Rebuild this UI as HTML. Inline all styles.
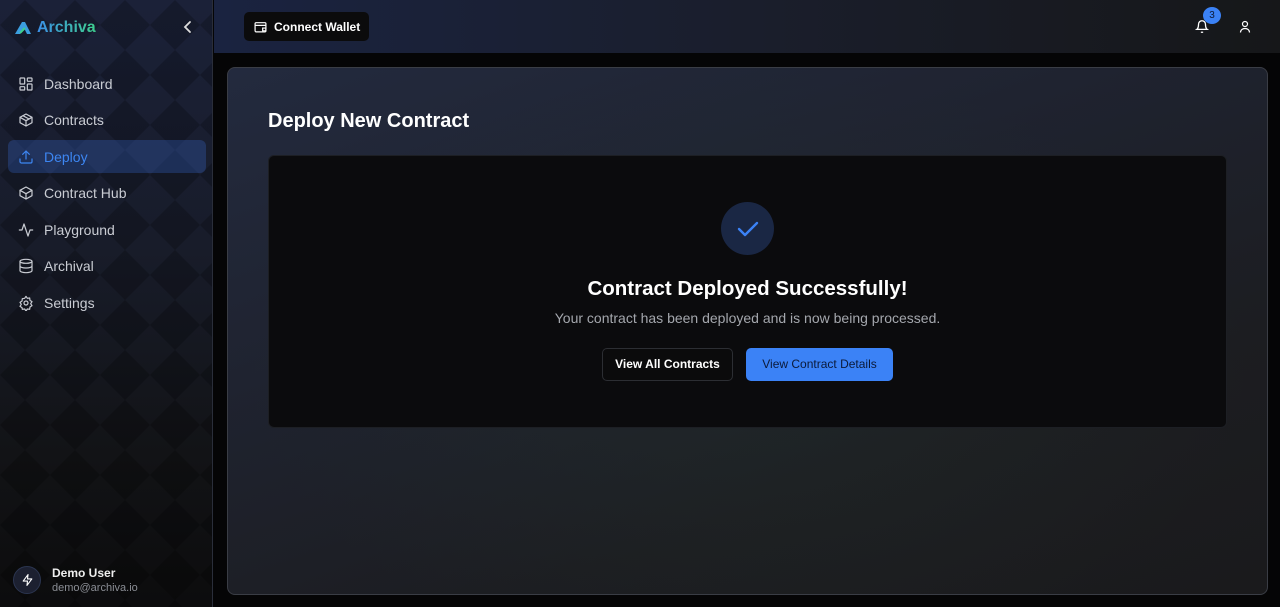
<!DOCTYPE html>
<html><head><meta charset="utf-8"><style>
*{box-sizing:border-box;margin:0;padding:0}
body{width:1280px;height:607px;overflow:hidden;background:#050506;font-family:"Liberation Sans",sans-serif;position:relative}
.side{position:absolute;left:0;top:0;width:213px;height:607px;background:linear-gradient(180deg,#1b2138 0%,#181c2a 40%,#121316 75%,#0c0c0d 100%);border-right:1px solid #2a2e3a;overflow:hidden}
.pat{position:absolute;inset:0;opacity:.2}
.logo{position:absolute;left:15px;top:19px;display:flex;align-items:center;gap:6px;font-size:16px;font-weight:bold;color:#4aa6e8}
.logo span{background:linear-gradient(90deg,#3b8fe8,#3ecf8e);-webkit-background-clip:text;color:transparent}
.chev{position:absolute;left:183px;top:20px}
.nav{position:absolute;left:8px;top:67px;width:198px}
.it{height:33px;margin-bottom:3.6px;display:flex;align-items:center;padding-left:10px;gap:10px;color:#c9ccd3;font-size:14px;border-radius:6px}
.it.act{background:rgba(59,110,220,.28);color:#3d86f2}
.it svg{width:16px;height:16px;fill:none;stroke:currentColor;stroke-width:1.8;stroke-linecap:round;stroke-linejoin:round}
.user{position:absolute;left:13px;top:566px;display:flex;align-items:center;gap:11px}
.av{width:28px;height:28px;border-radius:50%;background:#1c2030;border:1px solid #2b3550;display:flex;align-items:center;justify-content:center}
.un{color:#eee;font-size:12px;font-weight:bold}
.ue{color:#8a8d94;font-size:11px;margin-top:2px}
.top{position:absolute;left:214px;top:0;width:1066px;height:53px;background:linear-gradient(90deg,#1a2340 0%,#1a1e2c 50%,#161719 100%)}
.cw{position:absolute;left:244px;top:12px;width:125px;height:29px;background:#0b0b0c;border-radius:5px;color:#fff;font-size:12px;font-weight:bold;display:flex;align-items:center;padding-left:10px;gap:7px}
.panel{position:absolute;left:227px;top:67px;width:1041px;height:528px;border:1px solid #3a3d45;border-radius:8px;background:radial-gradient(ellipse 500px 300px at 520px 300px,rgba(40,60,50,.25),transparent),linear-gradient(160deg,#232a3e 0%,#1f2330 35%,#1c1d21 70%,#1a1a1c 100%)}
h1{position:absolute;left:268px;top:110px;color:#fff;font-size:20px;font-weight:bold}
.card{position:absolute;left:268px;top:155px;width:959px;height:273px;background:#0b0b0d;border:1px solid #1d1f24;border-radius:6px}
.chk{position:absolute;left:721px;top:202px;width:53px;height:53px;border-radius:50%;background:#1a2744;display:flex;align-items:center;justify-content:center}
.t1{position:absolute;left:0;width:1495px;top:277px;text-align:center;color:#fff;font-size:20.5px;font-weight:bold}
.t2{position:absolute;left:0;width:1495px;top:310px;text-align:center;color:#a4a7ad;font-size:14px}
.b1{position:absolute;left:602px;top:348px;width:131px;height:33px;border:1px solid #2c2e33;background:#0b0b0c;border-radius:5px;color:#fff;font-size:12px;font-weight:bold;text-align:center;line-height:31px}
.b2{position:absolute;left:746px;top:348px;width:147px;height:33px;background:#3b82f6;border-radius:5px;color:#0b1a3a;font-size:12px;text-align:center;line-height:33px}
</style></head><body>
<div class="side">
<svg class="pat" width="213" height="607"><defs><pattern id="p" width="50" height="50" patternUnits="userSpaceOnUse"><path d="M25 0L50 25L25 50L0 25Z" fill="#000"/></pattern></defs><rect width="213" height="607" fill="url(#p)"/></svg>
<div class="logo"><svg width="16" height="14" viewBox="0 0 16 14"><path d="M0 13L7 1h3l6 12h-4L9 7l-4 6z" fill="#3b9ee0"/><path d="M5 12l5-5" stroke="#3ecf8e" stroke-width="2"/></svg><span>Archiva</span></div>
<svg class="chev" width="10" height="14" viewBox="0 0 10 14"><path d="M7 2L2 7l5 5" stroke="#ddd" stroke-width="1.8" fill="none" stroke-linecap="round"/></svg>
<div class="nav">
<div class="it"><svg viewBox="0 0 24 24"><rect x="3" y="3" width="7" height="9" rx="1"/><rect x="14" y="3" width="7" height="5" rx="1"/><rect x="14" y="12" width="7" height="9" rx="1"/><rect x="3" y="16" width="7" height="5" rx="1"/></svg>Dashboard</div>
<div class="it"><svg viewBox="0 0 24 24"><path d="M21 8l-9-5-9 5v8l9 5 9-5z"/><path d="M3 8l9 5 9-5M12 13v8M7.5 5.5l9 5"/></svg>Contracts</div>
<div class="it act"><svg viewBox="0 0 24 24"><path d="M21 15v4a2 2 0 0 1-2 2H5a2 2 0 0 1-2-2v-4M17 8l-5-5-5 5M12 3v12"/></svg>Deploy</div>
<div class="it"><svg viewBox="0 0 24 24"><path d="M21 8l-9-5-9 5v8l9 5 9-5z"/><path d="M3 8l9 5 9-5M12 13v8"/></svg>Contract Hub</div>
<div class="it"><svg viewBox="0 0 24 24"><path d="M22 12h-4l-3 9L9 3l-3 9H2"/></svg>Playground</div>
<div class="it"><svg viewBox="0 0 24 24"><ellipse cx="12" cy="5" rx="9" ry="3"/><path d="M3 5v14c0 1.7 4 3 9 3s9-1.3 9-3V5M3 12c0 1.7 4 3 9 3s9-1.3 9-3"/></svg>Archival</div>
<div class="it"><svg viewBox="0 0 24 24"><circle cx="12" cy="12" r="3"/><path d="M12 2l2 3 3.5-.5.5 3.5 3 2-2 3 2 3-3 2-.5 3.5-3.5-.5-2 3-2-3-3.5.5L6 19l-3-2 2-3-2-3 3-2 .5-3.5L10 5z"/></svg>Settings</div>
</div>
<div class="user"><div class="av"><svg width="13" height="14" viewBox="0 0 24 24" fill="none" stroke="#fff" stroke-width="2" stroke-linejoin="round"><path d="M13 2L4 14h8l-1 8 9-12h-8z"/></svg></div><div><div class="un">Demo User</div><div class="ue">demo@archiva.io</div></div></div>
</div>
<div class="top"></div>
<div class="cw"><svg width="13" height="12" viewBox="0 0 24 22" fill="none" stroke="#fff" stroke-width="2.2"><rect x="2" y="3" width="20" height="17" rx="2"/><path d="M2 8h20M16 13h6v5h-6z"/></svg>Connect Wallet</div>
<svg style="position:absolute;left:1195px;top:19px" width="14" height="15" viewBox="0 0 24 26" fill="none" stroke="#fff" stroke-width="2.2"><path d="M6 9a6 6 0 0 1 12 0c0 7 3 9 3 9H3s3-2 3-9M10 23h4"/></svg>
<div style="position:absolute;left:1203px;top:7px;width:18px;height:17px;border-radius:50%;background:#3b82f6;color:#0d1a36;font-size:10px;text-align:center;line-height:17px">3</div>
<svg style="position:absolute;left:1239px;top:20px" width="12" height="13" viewBox="0 0 24 26" fill="none" stroke="#fff" stroke-width="2.4"><circle cx="12" cy="8" r="5"/><path d="M3 25c0-5 4-8 9-8s9 3 9 8"/></svg>
<div class="panel"></div>
<h1>Deploy New Contract</h1>
<div class="card"></div>
<div class="chk"><svg width="22" height="18" viewBox="0 0 22 18"><path d="M2 9l6 6L20 3" stroke="#3b82f6" stroke-width="2.4" fill="none" stroke-linecap="round" stroke-linejoin="round"/></svg></div>
<div class="t1">Contract Deployed Successfully!</div>
<div class="t2">Your contract has been deployed and is now being processed.</div>
<div class="b1">View All Contracts</div>
<div class="b2">View Contract Details</div>
</body></html>
